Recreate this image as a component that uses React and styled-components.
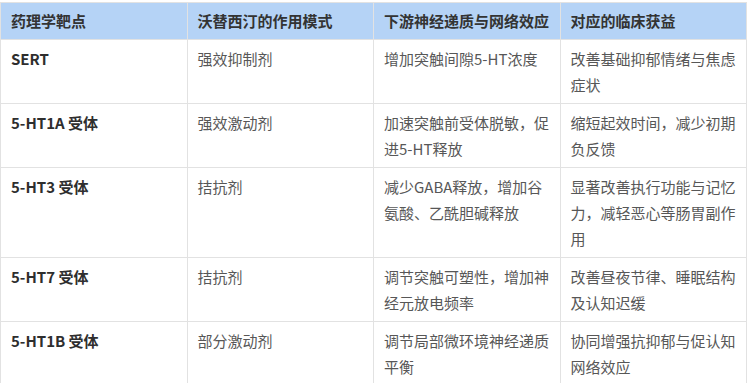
import React from "react";
import styled, { createGlobalStyle } from "styled-components";

const GlobalStyle = createGlobalStyle`
  body {
    margin: 0;
    background: #ffffff;
    font-family: "Noto Sans CJK SC", "Noto Sans", sans-serif;
  }
`;

const Wrap = styled.div`
  padding-top: 2px;
`;

const Table = styled.table`
  width: 747px;
  border-collapse: collapse;
  table-layout: fixed;
  font-size: 15px;
  line-height: 26px;
`;

const HeadCell = styled.th`
  background: #b5d3f6;
  color: #333333;
  font-weight: 600;
  text-align: left;
  padding: 5px 10px 5px 10px;
  border: 1px solid #e2e2e2;
`;

const Cell = styled.td`
  vertical-align: top;
  text-align: left;
  padding: 6px 10px 5px 10px;
  border: 1px solid #e2e2e2;
  color: ${(p) => (p.$strong ? "#2e2e2e" : "#575757")};
  font-weight: ${(p) => (p.$strong ? 700 : 400)};
`;

const headers = ["药理学靶点", "沃替西汀的作用模式", "下游神经递质与网络效应", "对应的临床获益"];

const rows = [
  ["SERT", "强效抑制剂", "增加突触间隙5-HT浓度", "改善基础抑郁情绪与焦虑症状"],
  ["5-HT1A 受体", "强效激动剂", "加速突触前受体脱敏，促进5-HT释放", "缩短起效时间，减少初期负反馈"],
  ["5-HT3 受体", "拮抗剂", "减少GABA释放，增加谷氨酸、乙酰胆碱释放", "显著改善执行功能与记忆力，减轻恶心等肠胃副作用"],
  ["5-HT7 受体", "拮抗剂", "调节突触可塑性，增加神经元放电频率", "改善昼夜节律、睡眠结构及认知迟缓"],
  ["5-HT1B 受体", "部分激动剂", "调节局部微环境神经递质平衡", "协同增强抗抑郁与促认知网络效应"],
];

export default function App() {
  return (
    <Wrap>
      <GlobalStyle />
      <Table>
        <thead>
          <tr>
            {headers.map((h) => (
              <HeadCell key={h}>{h}</HeadCell>
            ))}
          </tr>
        </thead>
        <tbody>
          {rows.map((r) => (
            <tr key={r[0]}>
              {r.map((c, i) => (
                <Cell key={i} $strong={i === 0}>
                  {c}
                </Cell>
              ))}
            </tr>
          ))}
        </tbody>
      </Table>
    </Wrap>
  );
}
